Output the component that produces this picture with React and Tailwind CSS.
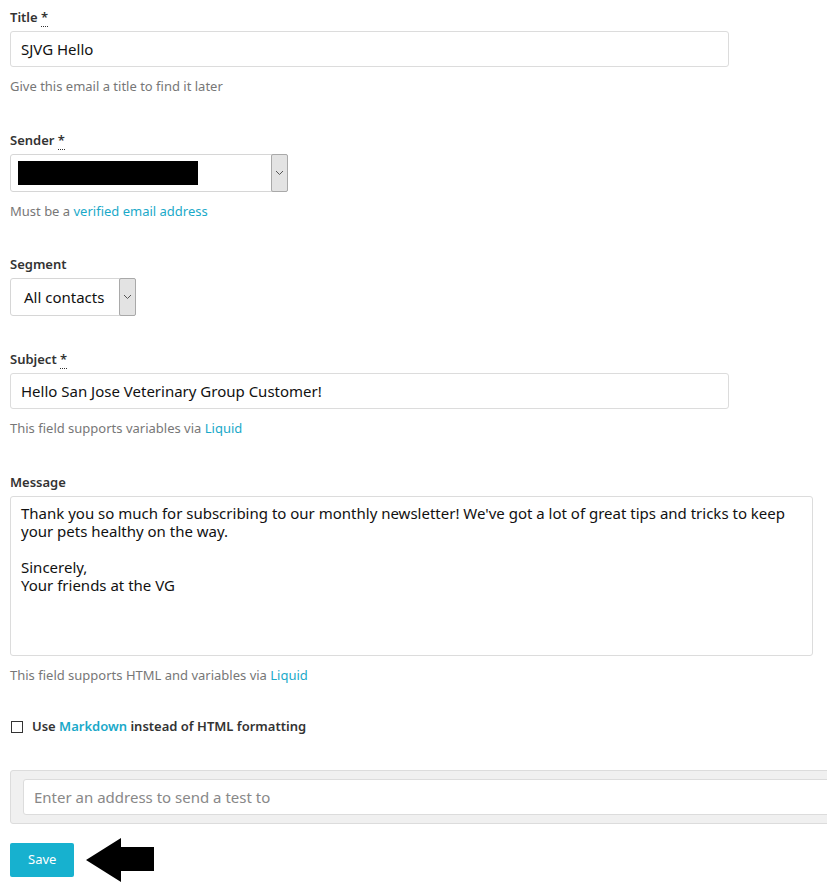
import React from 'react';

const font = { fontFamily: '"Noto Sans", "Open Sans", sans-serif' };

const Req = () => (
    <abbr className="no-underline border-b border-dotted border-[#333] cursor-help" title="required">*</abbr>
);

const Label = ({ children }) => (
    <label className="block text-[13px] leading-[20px] font-semibold text-[#333] mb-[4px]">{children}</label>
);

const Help = ({ children }) => (
    <p className="text-[13px] leading-[20px] text-[#777] mt-[9px]">{children}</p>
);

const Link = ({ children }) => <a href="#" className="text-[#1aa9c9]">{children}</a>;

// fake select with the little grey arrow box on the right
const Select = ({ width, children }) => (
    <div className={`flex h-[38px] border border-[#d6d6d6] rounded-[3px] bg-white ${width}`}>
        <div className="flex-1 flex items-center">{children}</div>
        <div className="w-[17px] my-[-1px] mr-[-1px] bg-[#e3e3e3] border border-[#a9a9a9] rounded-[2px] flex items-center justify-center">
            <svg width="9" height="6" viewBox="0 0 9 6" fill="none">
                <path d="M1 1l3.5 3.5L8 1" stroke="#555" strokeWidth="1" />
            </svg>
        </div>
    </div>
);

const App = () => {
    return (
        <div className="w-[827px] h-[887px] overflow-hidden bg-white" style={font}>
            <div className="pl-[10px] pt-[7px]">
                {/* Title */}
                <div className="mb-[34px]">
                    <Label>Title <Req /></Label>
                    <input
                        readOnly
                        value="SJVG Hello"
                        className="w-[719px] h-[36px] px-[10px] text-[15px] text-[#111] border border-[#dcdcdc] rounded-[3px] outline-none"
                    />
                    <Help>Give this email a title to find it later</Help>
                </div>

                {/* Sender */}
                <div className="mb-[33px]">
                    <Label>Sender <Req /></Label>
                    <Select width="w-[278px]">
                        <div className="ml-[7px] w-[180px] h-[24px] bg-black" />
                    </Select>
                    <Help>Must be a <Link>verified email address</Link></Help>
                </div>

                {/* Segment */}
                <div className="mb-[33px]">
                    <Label>Segment</Label>
                    <Select width="w-[126px]">
                        <span className="pl-[13px] text-[15px] text-[#111]">All contacts</span>
                    </Select>
                </div>

                {/* Subject */}
                <div className="mb-[34px]">
                    <Label>Subject <Req /></Label>
                    <input
                        readOnly
                        value="Hello San Jose Veterinary Group Customer!"
                        className="w-[719px] h-[36px] px-[10px] text-[15px] text-[#111] border border-[#dcdcdc] rounded-[3px] outline-none"
                    />
                    <Help>This field supports variables via <Link>Liquid</Link></Help>
                </div>

                {/* Message */}
                <div className="mb-[32px]">
                    <Label>Message</Label>
                    <div className="w-[803px] h-[160px] px-[10px] py-[7px] text-[15px] leading-[18px] text-[#111] border border-[#dcdcdc] rounded-[3px]">
                        <p>Thank you so much for subscribing to our monthly newsletter! We've got a lot of great tips and tricks to keep your pets healthy on the way.</p>
                        <p className="mt-[18px]">Sincerely,</p>
                        <p>Your friends at the VG</p>
                    </div>
                    <Help>This field supports HTML and variables via <Link>Liquid</Link></Help>
                </div>

                {/* Markdown checkbox */}
                <div className="flex items-center h-[20px] mb-[33px]">
                    <span className="w-[12px] h-[12px] border border-[#333] bg-white ml-[1px]" />
                    <span className="ml-[9px] text-[13px] font-semibold text-[#333]">
                        Use <Link>Markdown</Link> instead of HTML formatting
                    </span>
                </div>

                {/* send test */}
                <div className="w-[840px] h-[54px] bg-[#f0f0f0] border border-[#dcdcdc] rounded-[3px] pl-[12px] pt-[8px]">
                    <input
                        readOnly
                        placeholder="Enter an address to send a test to"
                        className="w-[830px] h-[36px] px-[10px] text-[15px] bg-white border border-[#dcdcdc] rounded-[3px] placeholder:text-[#888] outline-none"
                    />
                </div>

                <div className="flex items-center mt-[14px]">
                    <button className="h-[34px] px-[18px] bg-[#17b1cf] text-white text-[13px] rounded-[2px]">Save</button>
                    <svg className="ml-[12px]" width="68" height="44" viewBox="0 0 68 44">
                        <polygon points="0,22 35,0 35,9 68,9 68,33 35,33 35,44" fill="#000" />
                    </svg>
                </div>
            </div>
        </div>
    );
};

export default App;
